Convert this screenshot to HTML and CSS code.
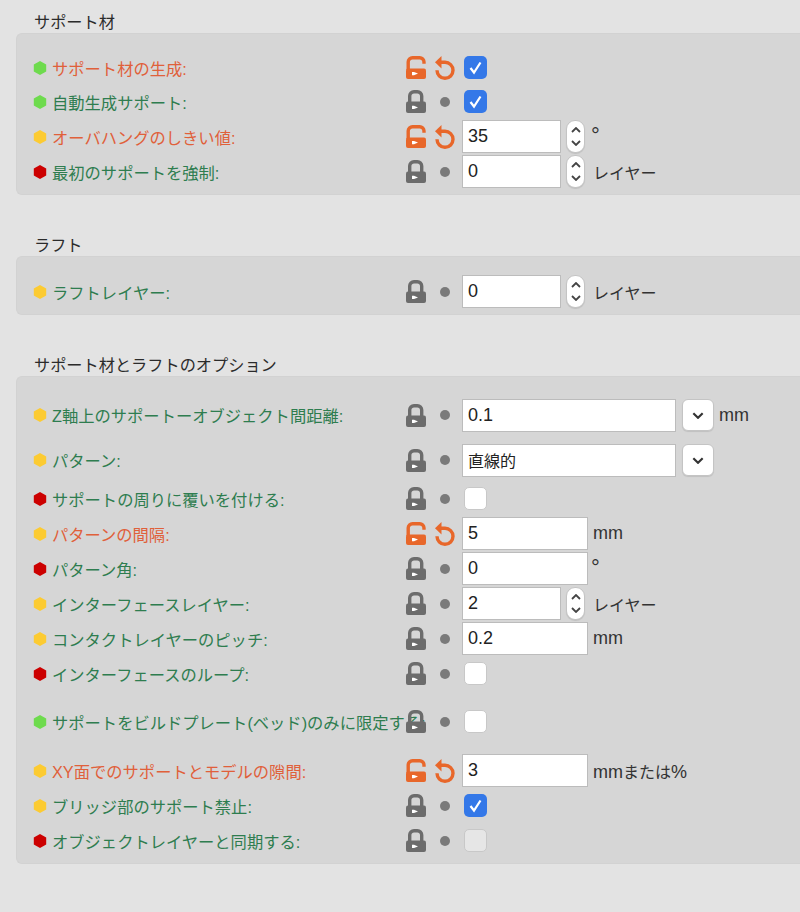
FILE: index.html
```html
<!DOCTYPE html>
<html lang="ja">
<head>
  <meta charset="UTF-8">
  <title>サポート材設定</title>
  <link rel="stylesheet" href="styles.css">
</head>
<body>
  <svg class="defs" width="0" height="0">
    <symbol id="hex" viewBox="0 0 14 14"><path d="M7 0 13.2 3.5V10.5L7 14 .8 10.5V3.5Z"/></symbol>
    <symbol id="lock" viewBox="0 0 20 23">
      <path d="M3.7 13V6A4.3 4.3 0 0 1 8 1.7h3.4A4.3 4.3 0 0 1 15.7 6v7" fill="none" stroke="currentColor" stroke-width="3.4"/>
      <rect y="11.5" width="20" height="11.5" rx="2" fill="currentColor"/>
      <path d="M6 15.8h2l4 1.6-4 1.6H6z" fill="#fff"/>
    </symbol>
    <symbol id="unlock" viewBox="0 0 20 23">
      <path d="M2.2 14V6A4.3 4.3 0 0 1 6.5 1.7h7.2A4.3 4.3 0 0 1 18 6v1.8" fill="none" stroke="currentColor" stroke-width="3.4"/>
      <rect y="12.5" width="20" height="10.5" rx="2" fill="currentColor"/>
      <path d="M6 16h2l4 1.6L8 19.200H6z" fill="#fff"/>
    </symbol>
    <symbol id="undo" viewBox="0 0 20 24">
      <path d="M6 6.300h4a8 8 0 1 1-8 8" fill="none" stroke="currentColor" stroke-width="3.4"/>
      <path d="M6.500 0v12.600L0 6.300Z" fill="currentColor"/>
    </symbol>
    <symbol id="check" viewBox="0 0 23 23"><path d="M6.500 12 10 16.500 16.500 6.500" fill="none" stroke="#fff" stroke-width="2.200"/></symbol>
    <symbol id="up" viewBox="0 0 10 6"><path d="M1 5 5 1 9 5" fill="none" stroke="currentColor" stroke-width="1.800"/></symbol>
    <symbol id="down" viewBox="0 0 10 6"><path d="M1 1 5 5 9 1" fill="none" stroke="currentColor" stroke-width="1.800"/></symbol>
  </svg>

  <h2 class="heading">サポート材</h2>
  <section class="panel">
    <div class="row row-first">
      <svg class="hex hex-green"><use href="#hex"/></svg>
      <span class="label label-changed">サポート材の生成:</span>
      <svg class="lock lock-open"><use href="#unlock"/></svg>
      <svg class="undo"><use href="#undo"/></svg>
      <span class="check check-on"><svg><use href="#check"/></svg></span>
    </div>
    <div class="row">
      <svg class="hex hex-green"><use href="#hex"/></svg>
      <span class="label">自動生成サポート:</span>
      <svg class="lock"><use href="#lock"/></svg>
      <span class="dot-cell"><i class="dot"></i></span>
      <span class="check check-on"><svg><use href="#check"/></svg></span>
    </div>
    <div class="row">
      <svg class="hex hex-yellow"><use href="#hex"/></svg>
      <span class="label label-changed">オーバハングのしきい値:</span>
      <svg class="lock lock-open"><use href="#unlock"/></svg>
      <svg class="undo"><use href="#undo"/></svg>
      <input class="field" type="text" value="35">
      <span class="spin"><svg><use href="#up"/></svg><svg><use href="#down"/></svg></span>
      <span class="unit unit-degree">°</span>
    </div>
    <div class="row">
      <svg class="hex hex-red"><use href="#hex"/></svg>
      <span class="label">最初のサポートを強制:</span>
      <svg class="lock"><use href="#lock"/></svg>
      <span class="dot-cell"><i class="dot"></i></span>
      <input class="field" type="text" value="0">
      <span class="spin"><svg><use href="#up"/></svg><svg><use href="#down"/></svg></span>
      <span class="unit">レイヤー</span>
    </div>
  </section>

  <h2 class="heading">ラフト</h2>
  <section class="panel">
    <div class="row">
      <svg class="hex hex-yellow"><use href="#hex"/></svg>
      <span class="label">ラフトレイヤー:</span>
      <svg class="lock"><use href="#lock"/></svg>
      <span class="dot-cell"><i class="dot"></i></span>
      <input class="field" type="text" value="0">
      <span class="spin"><svg><use href="#up"/></svg><svg><use href="#down"/></svg></span>
      <span class="unit">レイヤー</span>
    </div>
  </section>

  <h2 class="heading">サポート材とラフトのオプション</h2>
  <section class="panel">
    <div class="row row-combo">
      <svg class="hex hex-yellow"><use href="#hex"/></svg>
      <span class="label">Z軸上のサポートーオブジェクト間距離:</span>
      <svg class="lock"><use href="#lock"/></svg>
      <span class="dot-cell"><i class="dot"></i></span>
      <input class="field field-wide" type="text" value="0.1">
      <span class="drop"><svg><use href="#down"/></svg></span>
      <span class="unit unit-latin">mm</span>
    </div>
    <div class="row row-combo">
      <svg class="hex hex-yellow"><use href="#hex"/></svg>
      <span class="label">パターン:</span>
      <svg class="lock"><use href="#lock"/></svg>
      <span class="dot-cell"><i class="dot"></i></span>
      <input class="field field-wide field-text" type="text" value="直線的">
      <span class="drop"><svg><use href="#down"/></svg></span>
    </div>
    <div class="row">
      <svg class="hex hex-red"><use href="#hex"/></svg>
      <span class="label">サポートの周りに覆いを付ける:</span>
      <svg class="lock"><use href="#lock"/></svg>
      <span class="dot-cell"><i class="dot"></i></span>
      <span class="check"></span>
    </div>
    <div class="row">
      <svg class="hex hex-yellow"><use href="#hex"/></svg>
      <span class="label label-changed">パターンの間隔:</span>
      <svg class="lock lock-open"><use href="#unlock"/></svg>
      <svg class="undo"><use href="#undo"/></svg>
      <input class="field field-mid" type="text" value="5">
      <span class="unit unit-latin">mm</span>
    </div>
    <div class="row">
      <svg class="hex hex-red"><use href="#hex"/></svg>
      <span class="label">パターン角:</span>
      <svg class="lock"><use href="#lock"/></svg>
      <span class="dot-cell"><i class="dot"></i></span>
      <input class="field field-mid" type="text" value="0">
      <span class="unit unit-degree">°</span>
    </div>
    <div class="row">
      <svg class="hex hex-yellow"><use href="#hex"/></svg>
      <span class="label">インターフェースレイヤー:</span>
      <svg class="lock"><use href="#lock"/></svg>
      <span class="dot-cell"><i class="dot"></i></span>
      <input class="field" type="text" value="2">
      <span class="spin"><svg><use href="#up"/></svg><svg><use href="#down"/></svg></span>
      <span class="unit">レイヤー</span>
    </div>
    <div class="row">
      <svg class="hex hex-yellow"><use href="#hex"/></svg>
      <span class="label">コンタクトレイヤーのピッチ:</span>
      <svg class="lock"><use href="#lock"/></svg>
      <span class="dot-cell"><i class="dot"></i></span>
      <input class="field field-mid" type="text" value="0.2">
      <span class="unit unit-latin">mm</span>
    </div>
    <div class="row">
      <svg class="hex hex-red"><use href="#hex"/></svg>
      <span class="label">インターフェースのループ:</span>
      <svg class="lock"><use href="#lock"/></svg>
      <span class="dot-cell"><i class="dot"></i></span>
      <span class="check"></span>
    </div>
    <div class="row row-spaced">
      <svg class="hex hex-green"><use href="#hex"/></svg>
      <span class="label">サポートをビルドプレート(ベッド)のみに限定する:</span>
      <svg class="lock"><use href="#lock"/></svg>
      <span class="dot-cell"><i class="dot"></i></span>
      <span class="check"></span>
    </div>
    <div class="row">
      <svg class="hex hex-yellow"><use href="#hex"/></svg>
      <span class="label label-changed">XY面でのサポートとモデルの隙間:</span>
      <svg class="lock lock-open"><use href="#unlock"/></svg>
      <svg class="undo"><use href="#undo"/></svg>
      <input class="field field-mid" type="text" value="3">
      <span class="unit"><span class="unit-latin">mm</span>または<span class="unit-latin">%</span></span>
    </div>
    <div class="row">
      <svg class="hex hex-yellow"><use href="#hex"/></svg>
      <span class="label">ブリッジ部のサポート禁止:</span>
      <svg class="lock"><use href="#lock"/></svg>
      <span class="dot-cell"><i class="dot"></i></span>
      <span class="check check-on"><svg><use href="#check"/></svg></span>
    </div>
    <div class="row">
      <svg class="hex hex-red"><use href="#hex"/></svg>
      <span class="label">オブジェクトレイヤーと同期する:</span>
      <svg class="lock"><use href="#lock"/></svg>
      <span class="dot-cell"><i class="dot"></i></span>
      <span class="check check-disabled"></span>
    </div>
  </section>
</body>
</html>
```

FILE: styles.css
```css
body {
  margin: 0;
  padding: 10px 0 0 16px;
  height: 902px;
  overflow: hidden;
  background-color: #e3e3e3;
  color: #2b2b2b;
  font-family: "Liberation Sans", "Noto Sans CJK JP", sans-serif;
  font-size: 16.3px;
}
.defs {
  position: absolute;
}
.heading {
  margin: 0;
  height: 23px;
  padding-left: 18px;
  font-size: 16.2px;
  font-weight: normal;
  line-height: 25px;
}
.panel {
  margin-bottom: 38px;
  padding: 17px 0 5px;
  background-color: #d6d6d6;
  border: 1px solid #d2d2d2;
  border-right: none;
  border-radius: 6px 0 0 6px;
}
.row {
  display: flex;
  align-items: center;
  height: 35px;
  padding-left: 16px;
}
.row-first {
  height: 33px;
}
.row-combo {
  height: 42px;
}
.row-combo + .row-combo {
  margin-top: 3px;
}
.row-spaced {
  margin: 13px 0 14px;
}
.hex {
  flex: none;
  width: 14px;
  height: 14px;
}
.hex-green { fill: #6edb4e; }
.hex-yellow { fill: #fccb32; }
.hex-red { fill: #cc0000; }
.label {
  flex: none;
  width: 354px;
  margin-left: 5px;
  color: #2e7d4f;
  white-space: nowrap;
}
.label-changed {
  color: #e0603a;
}
.lock {
  flex: none;
  width: 20px;
  height: 23px;
  color: #6c6c6c;
}
.lock-open {
  color: #e8672a;
}
.undo {
  flex: none;
  width: 20px;
  height: 24px;
  margin: 0 7px 0 9px;
  color: #e8672a;
}
.dot-cell {
  flex: none;
  display: flex;
  justify-content: center;
  width: 22px;
  margin: 0 6px 0 8px;
}
.dot {
  width: 10px;
  height: 10px;
  border-radius: 50%;
  background-color: #7a7a7a;
}
.check {
  flex: none;
  width: 23px;
  height: 23px;
  margin-left: 2px;
  box-sizing: border-box;
  background-color: #fff;
  border: 1px solid #c8c8c8;
  border-radius: 5px;
}
.check svg {
  display: block;
  width: 23px;
  height: 23px;
}
.check-on {
  background-color: #3478e8;
  border: none;
}
.check-disabled {
  background-color: #e6e6e6;
}
.field {
  flex: none;
  width: 99px;
  height: 33px;
  padding: 0 5px;
  box-sizing: border-box;
  background-color: #fff;
  border: 1px solid #bcbcbc;
  border-radius: 0;
  color: #222;
  font: inherit;
  font-size: 18px;
}
.field-mid {
  width: 126px;
}
.field-wide {
  width: 214px;
}
.field-text {
  font-size: 16px;
}
.spin {
  flex: none;
  display: flex;
  flex-direction: column;
  align-items: center;
  justify-content: center;
  gap: 7px;
  width: 19px;
  height: 33px;
  margin-left: 5px;
  box-sizing: border-box;
  background-color: #fff;
  border: 1px solid #c4c4c4;
  border-radius: 9px;
  box-shadow: 0 1px 1px rgba(0,0,0,0.1);
  color: #444;
}
.spin svg {
  width: 10px;
  height: 6px;
}
.spin + .unit {
  margin-left: 8px;
}
.drop {
  flex: none;
  display: flex;
  align-items: center;
  justify-content: center;
  width: 32px;
  height: 32px;
  margin-left: 6px;
  box-sizing: border-box;
  background-color: #fff;
  border: 1px solid #c4c4c4;
  border-radius: 6px;
  box-shadow: 0 1px 1px rgba(0,0,0,0.1);
  color: #333;
}
.drop svg {
  width: 12px;
  height: 7px;
}
.unit {
  margin-left: 5px;
  color: #333;
  font-size: 16px;
}
.unit-latin {
  font-size: 18px;
}
.unit-degree {
  margin-top: -1px;
  margin-left: 3px;
  font-size: 22px;
}
.spin + .unit-degree {
  margin-left: 6px;
}
```
